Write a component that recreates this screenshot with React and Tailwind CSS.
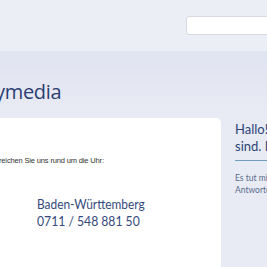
export default function App() {
  return (
    <div className="h-[267px] w-[267px] overflow-hidden bg-[#e8ebf4] font-['Open_Sans',sans-serif]">
      <header className="flex h-[51px] justify-end bg-[#eceef6] pt-[16px]">
        <input
          type="text"
          className="h-[19px] w-[90px] shrink-0 -mr-[9px] rounded-[3px] border border-[#d6d9e2] bg-white"
        />
      </header>
      <div className="h-[67px] bg-gradient-to-b from-[#e0e3f0] to-[#e9ebf4] pt-[29px]">
        <h1 className="-ml-[5px] text-[20px] leading-[24px] tracking-[-0.3px] text-[#2c3e72]">ymedia</h1>
      </div>
      <main className="flex">
        <section className="h-[149px] w-[221px] shrink-0 rounded-tr-[5px] bg-white">
          <p className="-ml-[1px] mt-[38px] font-['Liberation_Sans',sans-serif] text-[7.5px] leading-[10px] tracking-[-0.15px] text-[#333]">
            reichen Sie uns rund um die Uhr:
          </p>
          <div className="mt-[29px] pl-[37px] font-['Lato',sans-serif] text-[#34497c]">
            <p className="origin-left scale-x-[0.85] whitespace-nowrap text-[14px] leading-[17px]">Baden-Württemberg</p>
            <p className="origin-left scale-x-[0.87] whitespace-nowrap text-[14px] leading-[17px]">0711 / 548 881 50</p>
          </div>
        </section>
        <aside className="w-[60px] shrink-0 pl-[14px] pt-[3px] font-['Lato',sans-serif]">
          <p className="whitespace-nowrap text-[13px] leading-[17px] text-[#2d4378]">Hallo!</p>
          <p className="whitespace-nowrap text-[13px] leading-[17px] text-[#2d4378]">sind. I</p>
          <div className="mt-[5px] h-px bg-[#6e9fc0]" />
          <p className="mt-[13px] whitespace-nowrap text-[8.5px] leading-[8px] text-[#5a6b8c]">Es tut mir</p>
          <p className="mt-[4px] whitespace-nowrap text-[8.5px] leading-[8px] text-[#5a6b8c]">Antworten</p>
        </aside>
      </main>
    </div>
  );
}
